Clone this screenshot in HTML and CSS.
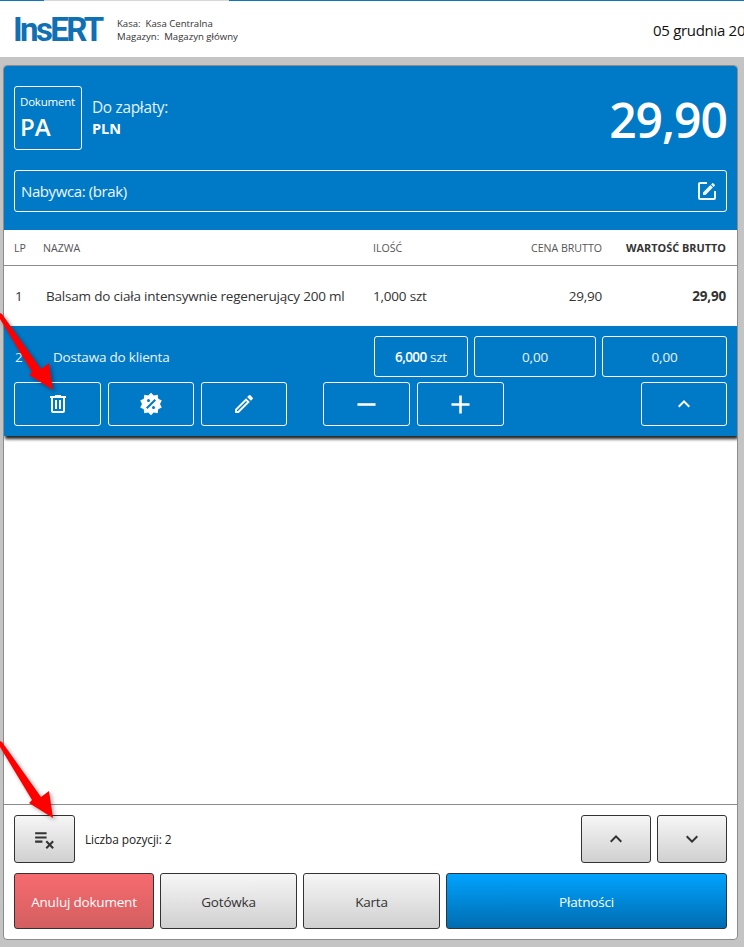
FILE: index.html
```html
<!DOCTYPE html>
<html lang="pl">
<head>
<meta charset="utf-8">
<title>InsERT</title>
<link rel="stylesheet" href="styles.css">
</head>
<body>
<header class="topbar">
  <div class="topline"><span class="tl-blue-a"></span><span class="tl-gray"></span><span class="tl-blue-b"></span></div>
  <div class="topcontent">
    <div class="brand">
      <div class="logo">InsERT</div>
      <div class="store"><div>Kasa:&nbsp; Kasa Centralna</div><div>Magazyn:&nbsp; Magazyn główny</div></div>
    </div>
    <div class="date">05 grudnia 2023</div>
  </div>
</header>
<main class="panel">
  <section class="summary">
    <div class="summary-top">
      <div class="docbox"><div class="doc-label">Dokument</div><div class="doc-code">PA</div></div>
      <div class="due"><div class="due-label">Do zapłaty:</div><div class="due-cur">PLN</div></div>
      <div class="amount">29,90</div>
    </div>
    <div class="buyer"><span>Nabywca: (brak)</span>
      <svg class="ico-24" viewBox="0 0 24 24"><path d="M5,3C3.89,3 3,3.89 3,5V19A2,2 0 0,0 5,21H19A2,2 0 0,0 21,19V12H19V19H5V5H12V3H5M17.78,4C17.61,4 17.43,4.07 17.3,4.2L16.08,5.41L18.58,7.91L19.8,6.7C20.06,6.44 20.06,6 19.8,5.75L18.25,4.2C18.12,4.07 17.95,4 17.78,4M15.37,6.12L8,13.5V16H10.5L17.87,8.62L15.37,6.12Z"/></svg>
    </div>
  </section>
  <div class="thead">
    <span class="c-lp">LP</span><span class="c-name">NAZWA</span><span class="c-qty">ILOŚĆ</span><span class="c-price">CENA BRUTTO</span><span class="c-total strong">WARTOŚĆ BRUTTO</span>
  </div>
  <div class="row">
    <span class="c-lp r-lp">1</span><span class="c-name r-name">Balsam do ciała intensywnie regenerujący 200 ml</span><span class="c-qty">1,000 szt</span><span class="c-price">29,90</span><span class="c-total strong">29,90</span>
  </div>
  <section class="active">
    <div class="active-top">
      <span class="a-lp">2</span><span class="a-name">Dostawa do klienta</span>
      <div class="abox a-qty"><span class="semi">6,000</span>&nbsp;<span>szt</span></div>
      <div class="abox a-price">0,00</div>
      <div class="abox a-total">0,00</div>
    </div>
    <div class="active-actions">
      <button class="act b-del"><svg class="ico-24" viewBox="0 0 24 24"><path d="M9,3V4H4V6H5V19A2,2 0 0,0 7,21H17A2,2 0 0,0 19,19V6H20V4H15V3H9M7,6H17V19H7V6M9,8V17H11V8H9M13,8V17H15V8H13Z"/></svg></button>
      <button class="act b-disc"><svg class="ico-24" viewBox="0 0 24 24"><path fill-rule="evenodd" d="M18.65 2.85L19.26 6.71L22.77 8.5L21 12L22.78 15.5L19.24 17.29L18.63 21.15L14.74 20.54L11.97 23.3L9.19 20.5L5.33 21.14L4.71 17.25L1.22 15.47L3 11.97L1.23 8.5L4.74 6.69L5.35 2.86L9.22 3.5L12 .69L14.77 3.46L18.65 2.85M9.5 7A1.5 1.5 0 0 0 8 8.5A1.5 1.5 0 0 0 9.5 10A1.5 1.5 0 0 0 11 8.5A1.5 1.5 0 0 0 9.5 7M14.5 14A1.5 1.5 0 0 0 13 15.5A1.5 1.5 0 0 0 14.5 17A1.5 1.5 0 0 0 16 15.5A1.5 1.5 0 0 0 14.5 14M8.41 17L17 8.41L15.59 7L7 15.59L8.41 17Z"/></svg></button>
      <button class="act b-edit"><svg class="ico-24" viewBox="0 0 24 24"><path d="M14.06,9L15,9.94L5.92,19H5V18.08L14.06,9M17.66,3C17.41,3 17.15,3.1 16.96,3.29L15.13,5.12L18.88,8.87L20.71,7.04C21.1,6.65 21.1,6 20.71,5.63L18.37,3.29C18.17,3.09 17.92,3 17.66,3M14.06,6.19L3,17.25V21H6.75L17.81,9.94L14.06,6.19Z"/></svg></button>
      <button class="act b-minus"><svg class="ico-31" viewBox="0 0 24 24"><path d="M19,13H5V11H19V13Z"/></svg></button>
      <button class="act b-plus"><svg class="ico-31" viewBox="0 0 24 24"><path d="M19,13H13V19H11V13H5V11H11V5H13V11H19V13Z"/></svg></button>
      <button class="act b-up"><svg class="ico-24" viewBox="0 0 24 24"><path d="M7.41,15.41L12,10.83L16.59,15.41L18,14L12,8L6,14L7.41,15.41Z"/></svg></button>
    </div>
  </section>
  <div class="spacer"></div>
  <footer class="foot">
    <div class="foot-top">
      <button class="gbtn b-clear"><svg class="ico-25" viewBox="0 0 24 24"><path d="M14 10H3V12H14V10M14 6H3V8H14V6M3 16H10V14H3V16M14.4 22L17 19.4L19.6 22L21 20.6L18.4 18L21 15.4L19.6 14L17 16.6L14.4 14L13 15.4L15.6 18L13 20.6L14.4 22Z"/></svg></button>
      <span class="count">Liczba pozycji: 2</span>
      <button class="gbtn b-nav b-nav-first"><svg class="ico-24" viewBox="0 0 24 24"><path d="M7.41,15.41L12,10.83L16.59,15.41L18,14L12,8L6,14L7.41,15.41Z"/></svg></button>
      <button class="gbtn b-nav"><svg class="ico-24" viewBox="0 0 24 24"><path d="M7.41,8.59L12,13.17L16.59,8.59L18,10L12,16L6,10L7.41,8.59Z"/></svg></button>
    </div>
    <div class="foot-actions">
      <button class="big red">Anuluj dokument</button>
      <button class="big gray w-cash">Gotówka</button>
      <button class="big gray w-card">Karta</button>
      <button class="big blue">Płatności</button>
    </div>
  </footer>
</main>
<svg class="arrow arrow-a" viewBox="0 0 60 84"><polygon points="0,3 2,4 41,59 49,53 53,80 29,65 32,62 0,9"/></svg>
<svg class="arrow arrow-b" viewBox="0 0 60 84"><polygon points="0,3 2,4 41,59 49,53 53,80 29,65 32,62 0,9"/></svg>
</body>
</html>
```

FILE: styles.css
```css
* { box-sizing: border-box; }
html, body { margin: 0; padding: 0; }
body {
  width: 744px; height: 947px; overflow: hidden; position: relative;
  background: #c4c4c4; font-family: "Open Sans", "Noto Sans", sans-serif; color: #333;
  display: flex; flex-direction: column;
}
button { font-family: inherit; padding: 0; cursor: pointer; display: flex; align-items: center; justify-content: center; }
svg { display: block; fill: currentColor; }
.ico-24 { width: 24px; height: 24px; }
.ico-25 { width: 25px; height: 25px; }
.ico-31 { width: 31px; height: 31px; }

.topbar { height: 57px; background: #fff; flex: none; overflow: hidden; }
.topline { display: flex; height: 1px; }
.tl-blue-a { width: 44px; background: #0f75bc; }
.tl-gray { width: 185px; background: #d8d8d8; }
.tl-blue-b { flex: 1; background: #0f75bc; }
.topcontent { display: flex; align-items: center; height: 56px; padding: 1px 0 0 13px; white-space: nowrap; }
.brand { width: 640px; flex: none; display: flex; align-items: center; }
.logo { font-family: "Roboto", sans-serif; font-weight: 700; font-size: 33px; line-height: 34px; color: #0f70b4; letter-spacing: -2.6px; width: 104px; }
.store { font-size: 9.6px; line-height: 13px; color: #333; }
.date { font-size: 15px; letter-spacing: -.3px; color: #111; flex: none; }

.panel {
  width: 735px; height: 875px; margin: 8px 0 0 3px; background: #fff;
  border: 1px solid #8c8c8c; border-radius: 4px; overflow: hidden;
  display: flex; flex-direction: column; flex: none;
}
.summary { height: 164px; background: #007ac7; color: #fff; padding: 20px 10px 0; flex: none; }
.summary-top { display: flex; align-items: center; height: 64px; }
.docbox { width: 68px; height: 64px; border: 1px solid #fff; border-radius: 3px; padding: 7px 0 0 5px; }
.doc-label { font-size: 11.5px; line-height: 16px; letter-spacing: -.2px; }
.doc-code { font-size: 24px; line-height: 32px; font-weight: 600; margin-top: 1px; }
.due { margin-left: 10px; }
.due-label { font-size: 15.4px; line-height: 22px; letter-spacing: -.3px; color: #e4f2fb; }
.due-cur { font-size: 14.5px; line-height: 20px; font-weight: 700; }
.amount { margin-left: auto; font-size: 48px; font-weight: 600; line-height: 64px; letter-spacing: -1px; padding-top: 4px; }
.buyer {
  margin-top: 20px; height: 42px; border: 1px solid #fff; border-radius: 3px;
  display: flex; align-items: center; justify-content: space-between; padding: 0 7px 0 6px;
  font-size: 15px; letter-spacing: -.4px; color: #f0f8fd;
}

.thead, .row { display: flex; align-items: center; padding: 0 11px 0 10px; flex: none; }
.thead { height: 36px; border-bottom: 1px solid #8c8c8c; font-size: 10.6px; color: #555; }
.row { height: 60px; font-size: 13.5px; letter-spacing: -.2px; color: #333; }
.c-lp { width: 29px; }
.c-name { width: 330px; }
.c-qty { width: 80px; }
.c-price { width: 149px; text-align: right; }
.c-total { width: 124px; text-align: right; margin-left: auto; }
.strong { font-weight: 700; }
.thead .strong { font-size: 10.9px; color: #333; }
.r-lp { width: 32px; padding-left: 1px; }
.r-name { width: 327px; }

.active { height: 110px; background: #007ac7; color: #fff; padding: 10px 10px 0; box-shadow: 1px 3px 3px #222; flex: none; position: relative; }
.active-top { display: flex; align-items: center; height: 41px; font-size: 13.5px; letter-spacing: -.2px; color: #eaf5fc; }
.a-lp { width: 39px; padding-left: 1px; }
.a-name { width: 321px; }
.abox { height: 41px; border: 1px solid #fff; border-radius: 3px; display: flex; align-items: center; justify-content: center; margin-right: 6px; }
.a-qty { width: 94px; }
.a-price { width: 122px; }
.a-total { width: 125px; margin-right: 0; }
.semi { font-weight: 600; letter-spacing: -.6px; color: #fff; }
.active-actions { display: flex; margin-top: 5px; gap: 7px; }
.act { height: 44px; width: 87px; background: transparent; border: 1px solid #fff; border-radius: 3px; color: #fff; }
.b-del { width: 87px; }
.b-disc, .b-edit { width: 86px; }
.b-minus { margin-left: 29px; }
.b-up { width: 86px; margin-left: auto; }

.spacer { flex: 1; }
.foot { height: 135px; border-top: 1px solid #8c8c8c; padding: 10px 10px 0; flex: none; }
.foot-top { display: flex; align-items: center; height: 48px; gap: 6px; }
.gbtn, .big { border: 1px solid #333; border-radius: 3px; background: linear-gradient(#f6f6f6, #d0d0d0); color: #333; }
.b-clear { width: 61px; height: 48px; padding-bottom: 1px; }
.count { margin-left: 4px; font-size: 11.9px; letter-spacing: -.1px; color: #222; }
.b-nav { width: 70px; height: 48px; }
.b-nav-first { margin-left: auto; }
.foot-actions { display: flex; gap: 6px; margin-top: 10px; }
.big { height: 56px; font-size: 13.5px; letter-spacing: -.2px; padding-top: 2px; }
.red { width: 140px; background: linear-gradient(#f76b6f, #d35f60); color: #fff; }
.w-cash, .w-card { width: 137px; }
.blue { width: 281px; background: linear-gradient(#00a3ff, #006cb0); color: #fff; }

.arrow { position: absolute; left: 0; width: 60px; height: 84px; fill: #f00; filter: drop-shadow(2px 2px 2px rgba(0,0,0,.35)); overflow: visible; }
.arrow-a { top: 310px; }
.arrow-b { top: 738px; }
```
